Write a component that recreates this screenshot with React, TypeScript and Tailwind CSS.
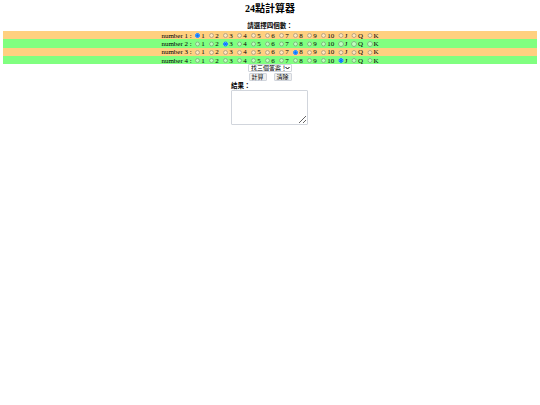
const values = ['1', '2', '3', '4', '5', '6', '7', '8', '9', '10', 'J', 'Q', 'K'];

const rows = [
  { name: 'number 1 :', group: 'n1', checked: '1', color: 'bg-[#ffd080]' },
  { name: 'number 2 :', group: 'n2', checked: '3', color: 'bg-[#80ff80]' },
  { name: 'number 3 :', group: 'n3', checked: '8', color: 'bg-[#ffd080]' },
  { name: 'number 4 :', group: 'n4', checked: 'J', color: 'bg-[#80ff80]' },
];

const App = () => {
  return (
    <div className="min-h-[405px] bg-white px-[3px] pt-[3px] text-black font-['Liberation_Serif','Noto_Sans_CJK_TC',serif]">
      <h1 className="text-center text-[10px] leading-[12px] font-bold h-[19px]">24點計算器</h1>
      <p className="text-center text-[6.5px] leading-[8px] font-bold mb-[1px]">請選擇四個數：</p>
      <div>
        {rows.map((row) => (
          <div key={row.group} className={`flex h-[8.33px] items-center justify-center text-[7px] leading-[8px] pt-[1px] ${row.color}`}>
            <span className="mr-[3px]">{row.name}</span>
            {values.map((v, i) => (
              <label key={v} className={`flex items-center ${i < values.length - 1 ? 'mr-[4px]' : ''}`}>
                <input
                  type="radio"
                  name={row.group}
                  defaultChecked={row.checked === v}
                  className={`m-0 mr-[1px] h-[5.5px] w-[5.5px] ${row.checked === v ? '' : 'opacity-50'}`}
                />
                <span>{v}</span>
              </label>
            ))}
          </div>
        ))}
      </div>
      <div className="flex flex-col items-center">
        <div className="relative h-[8px] w-[44px]">
          <select className="block h-[8px] w-[44px] appearance-none rounded-[1px] border border-gray-300 bg-white pl-[2px] text-[6px] leading-[6px]">
            <option>找三個答案！</option>
          </select>
          <svg className="absolute right-[2px] top-[2px] h-[4px] w-[5px]" viewBox="0 0 10 8" fill="none" stroke="#000" strokeWidth="2">
            <path d="M1 2l4 4 4-4" />
          </svg>
        </div>
        <div className="mt-[1px] flex gap-[7px]">
          <button className="h-[8px] w-[18px] rounded-[1px] border border-gray-300 bg-[#efefef] text-[6px] leading-[6px]">計算</button>
          <button className="h-[8px] w-[18px] rounded-[1px] border border-gray-300 bg-[#efefef] text-[6px] leading-[6px]">清除</button>
        </div>
        <div className="mr-[1px] w-[77px]">
          <p className="text-[6.5px] leading-[9px] font-bold">結果：</p>
          <textarea className="block h-[35px] w-[77px] rounded-[1px] border border-gray-300 bg-white" />
        </div>
      </div>
    </div>
  );
};

export default App;
